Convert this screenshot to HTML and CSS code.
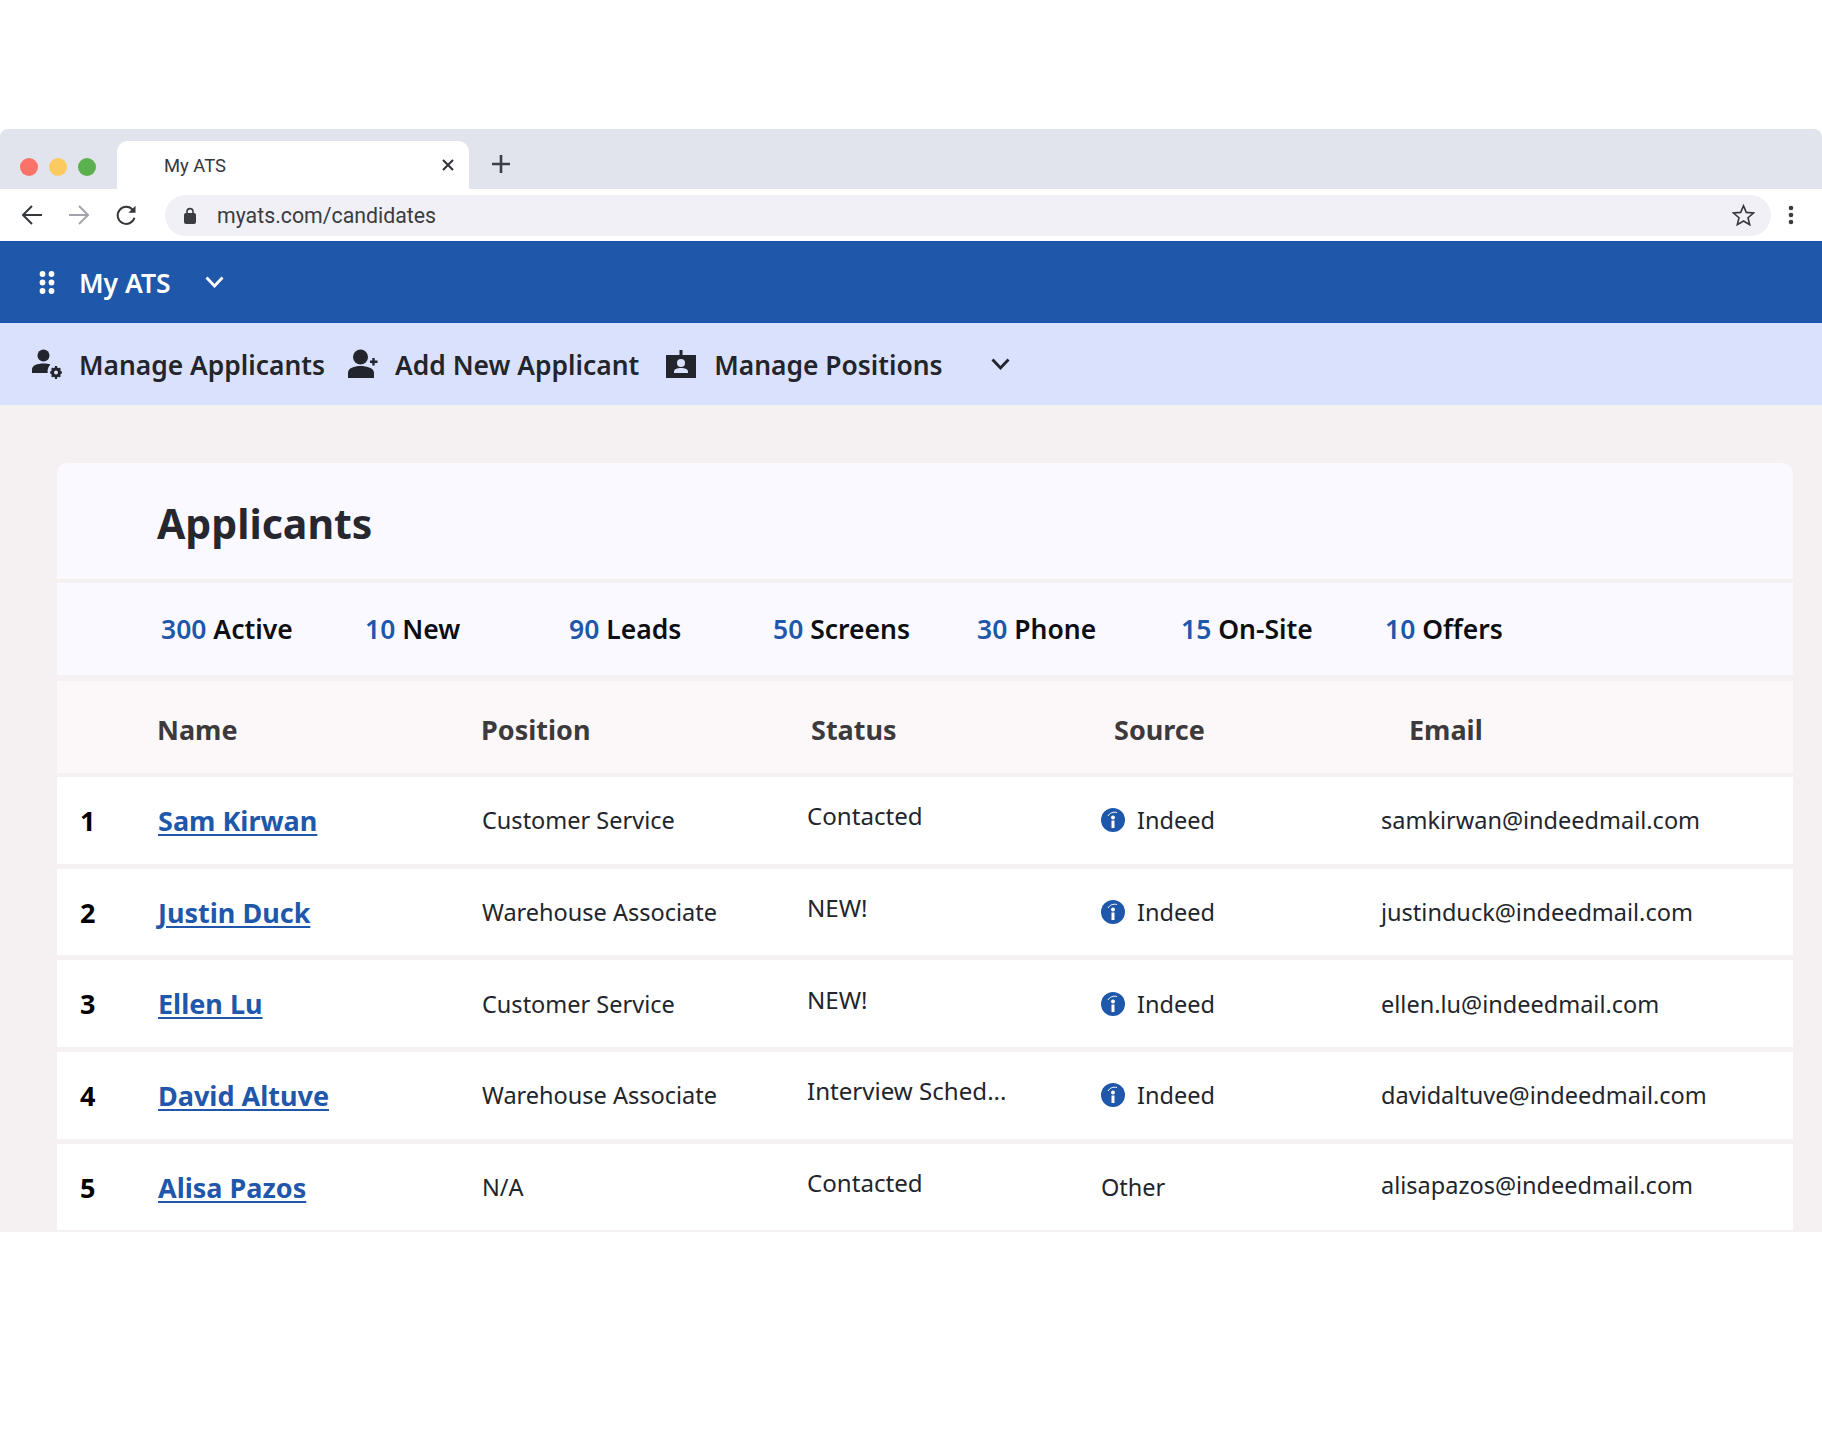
FILE: index.html
```html
<!DOCTYPE html>
<html lang="en">
<head>
<meta charset="utf-8">
<title>My ATS</title>
<link rel="stylesheet" href="styles.css">
</head>
<body>
<div class="window">
  <div class="tabstrip">
    <div class="lights"><span class="light red"></span><span class="light yellow"></span><span class="light green"></span></div>
    <div class="tab">
      <span class="tab-title">My ATS</span>
      <svg class="tab-close" width="12" height="12" viewBox="0 0 12 12"><path d="M1 1l10 10M11 1L1 11" stroke="#2f3136" stroke-width="2" fill="none"/></svg>
    </div>
    <svg class="tab-plus" width="20" height="20" viewBox="0 0 20 20"><path d="M10 1v18M1 10h18" stroke="#3c3f45" stroke-width="2.600" fill="none"/></svg>
  </div>
  <div class="toolbar">
    <svg class="tool back" width="22" height="22" viewBox="0 0 22 22"><path d="M21 11H2M11 2l-9 9 9 9" stroke="#35373c" stroke-width="2" fill="none"/></svg>
    <svg class="tool fwd" width="22" height="22" viewBox="0 0 22 22"><path d="M1 11h19M11 2l9 9-9 9" stroke="#a3a3ab" stroke-width="2" fill="none"/></svg>
    <svg class="tool reload" width="23" height="23" viewBox="0 0 22 22"><path d="M18.600 13.200a8.200 8.200 0 1 1-1.600-7.600" stroke="#35373c" stroke-width="1.900" fill="none"/><path d="M19.600 1.600v6.800h-6.800z" fill="#35373c"/></svg>
    <div class="omnibox">
      <svg class="lock" width="12" height="17" viewBox="0 0 12 17"><path d="M3 7V4.600a3 3 0 0 1 6 0V7" stroke="#3a3c42" stroke-width="1.600" fill="none"/><rect y="6" width="12" height="11" rx="2" fill="#3a3c42"/></svg>
      <span class="url">myats.com/candidates</span>
      <svg class="star" width="23" height="22" viewBox="0 0 23 22"><path d="M11.500 1.800l2.800 6.600 7.200.6-5.500 4.700 1.700 7-6.200-3.700-6.200 3.700 1.700-7L1.500 9l7.200-.6z" stroke="#35373c" stroke-width="1.600" fill="none"/></svg>
    </div>
    <svg class="kebab" width="6" height="20" viewBox="0 0 6 20"><circle cx="3" cy="3" r="2.300" fill="#3a3c42"/><circle cx="3" cy="10" r="2.300" fill="#3a3c42"/><circle cx="3" cy="17" r="2.300" fill="#3a3c42"/></svg>
  </div>
  <header class="appbar">
    <svg class="apps" width="16" height="25" viewBox="0 0 16 25"><g fill="#fff"><circle cx="3.500" cy="4" r="2.900"/><circle cx="12.500" cy="4" r="2.900"/><circle cx="3.500" cy="12.500" r="2.900"/><circle cx="12.500" cy="12.500" r="2.900"/><circle cx="3.500" cy="21" r="2.900"/><circle cx="12.500" cy="21" r="2.900"/></g></svg>
    <span class="app-name">My ATS</span>
    <svg class="app-chevron" width="19" height="12" viewBox="0 0 19 12"><path d="M1.500 1.500L9.500 10l8-8.500" stroke="#fff" stroke-width="2.800" fill="none"/></svg>
  </header>
  <nav class="subnav">
    <svg class="nav-icon i-manage" width="30" height="30" viewBox="0 0 30 30"><circle cx="11.500" cy="6.500" r="6" fill="#22252b"/><path d="M0 24v-3.500C0 16.500 5 14.500 11.500 14.500c2.500 0 5 .3 7 1-2.300 2-3.300 5-2.800 8.500z" fill="#22252b"/><circle cx="24" cy="23.500" r="3.500" fill="none" stroke="#22252b" stroke-width="3"/><path d="M24 17v3M24 27v3M18 23.500h3M27 23.500h3M19.800 19.300l2 2M26.200 25.700l2 2M19.800 27.700l2-2M26.200 21.300l2-2" stroke="#22252b" stroke-width="2.200"/></svg>
    <span class="nav-link l-manage">Manage Applicants</span>
    <svg class="nav-icon i-add" width="30" height="30" viewBox="0 0 30 30"><circle cx="12.500" cy="8" r="7.500" fill="#22252b"/><path d="M0 29v-5c0-5 6-7 12.500-7s13.500 2 13.500 7v5z" fill="#22252b"/><path d="M25.500 9v7.500M22 12.700h7.500" stroke="#22252b" stroke-width="2.400"/></svg>
    <span class="nav-link l-add">Add New Applicant</span>
    <svg class="nav-icon i-badge" width="30" height="28" viewBox="0 0 30 28"><path d="M0 5h13.500V0h3v5H30v23H0z" fill="#22252b"/><circle cx="15" cy="13" r="4" fill="#dae1fc"/><path d="M8 23v-1.500c0-2.500 3.500-3.500 7-3.500s7 1 7 3.500V23z" fill="#dae1fc"/></svg>
    <span class="nav-link l-pos">Manage Positions</span>
    <svg class="nav-chevron" width="19" height="12" viewBox="0 0 19 12"><path d="M1.500 1.500L9.500 10l8-8.500" stroke="#22252b" stroke-width="2.800" fill="none"/></svg>
  </nav>
  <main class="content">
    <section class="card">
      <div class="title-box"><h1 class="title">Applicants</h1></div>
      <div class="stats">
        <span class="stat"><span class="num">300</span> Active</span>
        <span class="stat"><span class="num">10</span> New</span>
        <span class="stat"><span class="num">90</span> Leads</span>
        <span class="stat"><span class="num">50</span> Screens</span>
        <span class="stat"><span class="num">30</span> Phone</span>
        <span class="stat"><span class="num">15</span> On-Site</span>
        <span class="stat"><span class="num">10</span> Offers</span>
      </div>
      <div class="head-row">
        <span>Name</span><span>Position</span><span>Status</span><span>Source</span><span>Email</span>
      </div>
      <div class="row">
        <span class="idx">1</span><a class="name" href="#">Sam Kirwan</a><span>Customer Service</span><span class="status">Contacted</span>
        <span class="source"><svg class="indeed" width="24" height="24" viewBox="0 0 24 24"><circle cx="12" cy="12" r="12" fill="#1f57aa"/><circle cx="12" cy="9.500" r="2" fill="#fff"/><path d="M10.500 12.500h3V20h-3z" fill="#fff"/><path d="M7 8c1.500-2.800 5-4.500 9-3.500" stroke="#fff" stroke-width="1" fill="none"/></svg>Indeed</span>
        <span>samkirwan@indeedmail.com</span>
      </div>
      <div class="row">
        <span class="idx">2</span><a class="name" href="#">Justin Duck</a><span>Warehouse Associate</span><span class="status">NEW!</span>
        <span class="source"><svg class="indeed" width="24" height="24" viewBox="0 0 24 24"><circle cx="12" cy="12" r="12" fill="#1f57aa"/><circle cx="12" cy="9.500" r="2" fill="#fff"/><path d="M10.500 12.500h3V20h-3z" fill="#fff"/><path d="M7 8c1.500-2.800 5-4.500 9-3.500" stroke="#fff" stroke-width="1" fill="none"/></svg>Indeed</span>
        <span>justinduck@indeedmail.com</span>
      </div>
      <div class="row">
        <span class="idx">3</span><a class="name" href="#">Ellen Lu</a><span>Customer Service</span><span class="status">NEW!</span>
        <span class="source"><svg class="indeed" width="24" height="24" viewBox="0 0 24 24"><circle cx="12" cy="12" r="12" fill="#1f57aa"/><circle cx="12" cy="9.500" r="2" fill="#fff"/><path d="M10.500 12.500h3V20h-3z" fill="#fff"/><path d="M7 8c1.500-2.800 5-4.500 9-3.500" stroke="#fff" stroke-width="1" fill="none"/></svg>Indeed</span>
        <span>ellen.lu@indeedmail.com</span>
      </div>
      <div class="row">
        <span class="idx">4</span><a class="name" href="#">David Altuve</a><span>Warehouse Associate</span><span class="status">Interview Sched...</span>
        <span class="source"><svg class="indeed" width="24" height="24" viewBox="0 0 24 24"><circle cx="12" cy="12" r="12" fill="#1f57aa"/><circle cx="12" cy="9.500" r="2" fill="#fff"/><path d="M10.500 12.500h3V20h-3z" fill="#fff"/><path d="M7 8c1.500-2.800 5-4.500 9-3.500" stroke="#fff" stroke-width="1" fill="none"/></svg>Indeed</span>
        <span>davidaltuve@indeedmail.com</span>
      </div>
      <div class="row">
        <span class="idx">5</span><a class="name" href="#">Alisa Pazos</a><span>N/A</span><span class="status">Contacted</span>
        <span class="source">Other</span>
        <span class="email-up">alisapazos@indeedmail.com</span>
      </div>
    </section>
  </main>
</div>
</body>
</html>
```
FILE: styles.css
```css
* { box-sizing: border-box; }
html, body { margin: 0; padding: 0; background: #fff; }
body { font-family: "Noto Sans", "Open Sans", sans-serif; color: #22252b; height: 1434px; overflow: hidden; }
.window { margin-top: 129px; }

.tabstrip { height: 60px; background: #e1e4ec; border-radius: 8px 8px 0 0; display: flex; align-items: flex-end; }
.lights { display: flex; gap: 11px; padding-left: 20px; width: 117px; flex: none; align-self: flex-start; padding-top: 29px; }
.light { width: 18px; height: 18px; border-radius: 50%; }
.red { background: #fa7268; }
.yellow { background: #fbcb60; }
.green { background: #5bb04f; }
.tab { width: 352px; height: 48px; background: #fff; border-radius: 11px 11px 0 0; display: flex; align-items: center; padding: 0 15px 0 47px; justify-content: space-between; }
.tab-title { font-family: Roboto, sans-serif; font-size: 18.400px; color: #35373c; }
.tab-plus { margin: 0 0 15px 22px; }

.toolbar { height: 52px; background: #fff; display: flex; align-items: center; padding-left: 21px; }
.tool { flex: none; }
.fwd { margin-left: 25px; }
.reload { margin-left: 25px; }
.omnibox { margin-left: 27px; width: 1606px; height: 41px; border-radius: 21px; background: #f0f0f6; display: flex; align-items: center; padding: 0 13px 0 19px; flex: none; }
.lock { flex: none; }
.url { font-family: Roboto, sans-serif; font-size: 21.300px; color: #3a3c42; margin-left: 21px; flex: 1; }
.star { margin-right: 3px; }
.kebab { margin-left: 17px; }

.appbar { height: 82px; background: #1f57aa; border-top: 1px solid #1a4fae; border-bottom: 1px solid #1a4fae; display: flex; align-items: center; padding-left: 39px; color: #fff; }
.app-name { font-size: 26.500px; font-weight: 600; margin-left: 24px; padding-top: 2px; }
.app-chevron { margin-left: 34px; }

.subnav { height: 82px; background: #dae1fc; display: flex; align-items: center; padding: 2px 0 0 32px; }
.nav-link { font-size: 26.400px; font-weight: 600; color: #22252b; white-space: nowrap; }
.nav-icon { flex: none; margin-bottom: 2px; }
.l-manage { margin-left: 17px; }
.i-add { margin-left: 23px; }
.l-add { margin-left: 17px; }
.i-badge { margin-left: 27px; }
.l-pos { margin-left: 18px; }
.nav-chevron { margin: 0 0 3px 48px; }

.content { background: #f5f1f2; height: 827px; padding: 58px 29px 0 57px; }
.card { display: flex; flex-direction: column; }
.title-box { height: 116px; background: #f9f9ff; border-radius: 10px 10px 0 0; display: flex; align-items: center; padding: 4px 0 0 100px; margin-bottom: 4px; }
.title { margin: 0; font-size: 41px; font-weight: 700; color: #26272f; }
.stats { height: 92px; background: #f9f9ff; display: grid; grid-template-columns: repeat(7, 204px); align-items: center; padding-left: 104px; margin-bottom: 6px; }
.stat { font-size: 26.500px; font-weight: 600; color: #0d0e12; white-space: nowrap; }
.num { color: #1f57aa; }
.head-row { height: 92px; background: #fcf8f9; display: grid; grid-template-columns: 324px 330px 303px 295px 1fr; align-items: center; padding: 4px 0 0 100px; font-size: 27px; font-weight: 700; color: #3c3a3c; margin-bottom: 4px; }
.row { height: 86.700px; background: #fff; display: grid; grid-template-columns: 78px 324px 325px 294px 280px 1fr; align-items: center; padding-left: 23px; font-size: 23.500px; color: #22252b; margin-bottom: 5px; }
.idx { font-size: 27px; font-weight: 700; color: #000; }
.name { font-size: 27px; font-weight: 700; color: #1f57aa; text-decoration: underline; text-underline-offset: 3px; text-decoration-thickness: 2px; justify-self: start; }
.status { padding-bottom: 9px; font-size: 24.100px; }
.email-up { padding-bottom: 5px; }
.source { display: flex; align-items: center; gap: 12px; }
.indeed { flex: none; }
```
